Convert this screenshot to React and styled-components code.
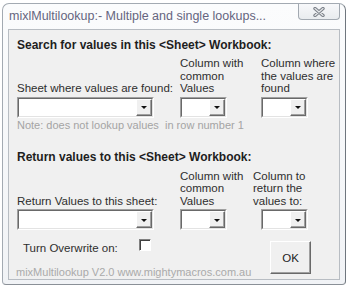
import React from 'react';
import styled, { createGlobalStyle } from 'styled-components';

const Global = createGlobalStyle`
  html, body { margin: 0; padding: 0; background: #ffffff; }
  body {
    width: 350px; height: 286px; overflow: hidden;
    font-family: "Liberation Sans", Arial, sans-serif;
    -webkit-font-smoothing: antialiased;
  }
`;

const Window = styled.div`
  box-sizing: border-box;
  margin: 3px 0 0 2px;
  width: 344px;
  height: 282px;
  border: 1px solid #a3aab2;
  border-right-color: #6f767e;
  border-bottom-color: #8a9097;
  border-radius: 7px 7px 4px 4px;
  background: linear-gradient(#fbfcfd, #f1f3f6);
  display: flex;
  flex-direction: column;
  padding: 0 4px 4px 5px;
`;

const TitleBar = styled.div`
  height: 25px;
  flex: none;
  display: flex;
  align-items: flex-start;
  justify-content: space-between;
`;

const Title = styled.div`
  padding: 5px 0 0 1px;
  font-size: 12.5px;
  line-height: 15px;
  color: #65657f;
  white-space: nowrap;
`;

const CloseButton = styled.div`
  box-sizing: border-box;
  width: 42px;
  height: 16px;
  margin-right: 1px;
  border: 1px solid #a2a9b1;
  border-top: none;
  border-radius: 0 0 4px 4px;
  background: linear-gradient(#f7f8fa, #e9ecef);
  display: flex;
  align-items: center;
  justify-content: center;
`;

const Panel = styled.div`
  box-sizing: border-box;
  flex: 1;
  min-height: 0;
  overflow: hidden;
  margin-right: 1px;
  border: 1px solid #b8bdc3;
  background: #f0f0f0;
  padding: 8px 8px 0 8px;
  color: #262626;
`;

const Heading = styled.div`
  font-weight: bold;
  font-size: 12px;
  line-height: 15px;
  color: #1e1e1e;
  white-space: nowrap;
  margin-top: ${(p) => p.$top || 0}px;
`;

const FieldGrid = styled.div`
  display: grid;
  grid-template-columns: 163px 81px 47px;
  align-items: end;
  margin-top: ${(p) => p.$top}px;
`;

const Field = styled.div`
  display: flex;
  flex-direction: column;
  gap: ${(p) => p.$gap}px;
`;

const Label = styled.div`
  font-size: 11.5px;
  line-height: 12.5px;
  color: #2e2e2e;
  white-space: pre;
  margin-left: ${(p) => p.$shift || 0}px;
`;

const ComboBox = styled.div`
  box-sizing: border-box;
  width: ${(p) => p.$w}px;
  height: 21px;
  border-top: 1px solid #a0a0a0;
  border-left: 1px solid #a0a0a0;
  border-right: 1px solid #ffffff;
  border-bottom: 1px solid #ffffff;
  display: flex;
`;

const ComboInner = styled.div`
  flex: 1;
  display: flex;
  border-top: 1px solid #696969;
  border-left: 1px solid #696969;
  border-right: 1px solid #e3e3e3;
  border-bottom: 1px solid #e3e3e3;
  background: #ffffff;
`;

const ComboText = styled.div`
  flex: 1;
`;

const DropButton = styled.div`
  box-sizing: border-box;
  width: 16px;
  background: #f0f0f0;
  border-top: 1px solid #ffffff;
  border-left: 1px solid #ffffff;
  border-right: 1px solid #696969;
  border-bottom: 1px solid #696969;
  box-shadow: inset -1px -1px 0 #a0a0a0;
  display: flex;
  align-items: center;
  justify-content: center;
  &::after {
    content: "";
    border-left: 3.5px solid transparent;
    border-right: 3.5px solid transparent;
    border-top: 3.5px solid #111;
    margin-top: 1px;
  }
`;

const Note = styled.div`
  margin-top: 1px;
  font-size: 11px;
  line-height: 13px;
  color: #a4a4a4;
  white-space: pre;
`;

const Bottom = styled.div`
  display: grid;
  grid-template-columns: 253px 41px;
  grid-template-rows: auto auto;
  margin-top: 10px;
`;

const OverwriteRow = styled.div`
  display: flex;
  align-items: flex-start;
  padding: 2px 0 0 6px;
`;

const OverwriteLabel = styled.div`
  width: 116px;
  font-size: 11.5px;
  line-height: 13px;
  color: #2e2e2e;
`;

const CheckBox = styled.div`
  box-sizing: border-box;
  width: 12px;
  height: 12px;
  margin-top: -3px;
  border-top: 1px solid #808080;
  border-left: 1px solid #808080;
  border-right: 1px solid #ffffff;
  border-bottom: 1px solid #ffffff;
  box-shadow: inset 1px 1px 0 #404040;
  background: #ffffff;
`;

const OkButton = styled.div`
  grid-column: 2;
  grid-row: 1 / span 2;
  box-sizing: border-box;
  height: 33px;
  margin-top: 1px;
  background: #f0f0f0;
  border-top: 1px solid #ffffff;
  border-left: 1px solid #ffffff;
  border-right: 1px solid #696969;
  border-bottom: 1px solid #696969;
  box-shadow: inset -1px -1px 0 #a0a0a0;
  display: flex;
  align-items: center;
  justify-content: center;
  font-size: 11.5px;
  color: #222;
`;

const Footer = styled.div`
  grid-column: 1;
  margin-top: 11px;
  font-size: 11px;
  line-height: 13px;
  color: #aaaaaa;
  margin-left: -1px;
  white-space: nowrap;
`;

const CloseGlyph = () => (
  <svg width="12" height="10" viewBox="0 0 12 10">
    <path d="M2 1.5 L10 8.5 M10 1.5 L2 8.5" stroke="#7b8088" strokeWidth="3.4" strokeLinecap="round" />
    <path d="M2 1.5 L10 8.5 M10 1.5 L2 8.5" stroke="#e6e8eb" strokeWidth="1.2" strokeLinecap="round" />
  </svg>
);

const Combo = ({ w }) => (
  <ComboBox $w={w}>
    <ComboInner>
      <ComboText />
      <DropButton />
    </ComboInner>
  </ComboBox>
);

export default function App() {
  return (
    <>
      <Global />
      <Window>
        <TitleBar>
          <Title>mixlMultilookup:- Multiple and single lookups...</Title>
          <CloseButton>
            <CloseGlyph />
          </CloseButton>
        </TitleBar>
        <Panel>
          <Heading>Search for values in this &lt;Sheet&gt; Workbook:</Heading>
          <FieldGrid $top={4}>
            <Field $gap={2}>
              <Label>Sheet where values are found:</Label>
              <Combo w={137} />
            </Field>
            <Field $gap={2}>
              <Label>{'Column with\ncommon\nValues'}</Label>
              <Combo w={47} />
            </Field>
            <Field $gap={2}>
              <Label>{'Column where\nthe values are\nfound'}</Label>
              <Combo w={47} />
            </Field>
          </FieldGrid>
          <Note>Note: does not lookup values  in row number 1</Note>
          <Heading $top={18}>Return values to this &lt;Sheet&gt; Workbook:</Heading>
          <FieldGrid $top={5}>
            <Field $gap={2}>
              <Label>Return Values to this sheet:</Label>
              <Combo w={137} />
            </Field>
            <Field $gap={2}>
              <Label>{'Column with\ncommon\nValues'}</Label>
              <Combo w={47} />
            </Field>
            <Field $gap={2}>
              <Label $shift={-8}>{'Column to\nreturn the\nvalues to:'}</Label>
              <Combo w={47} />
            </Field>
          </FieldGrid>
          <Bottom>
            <OverwriteRow>
              <OverwriteLabel>Turn Overwrite on:</OverwriteLabel>
              <CheckBox />
            </OverwriteRow>
            <OkButton>OK</OkButton>
            <Footer>mixMultilookup V2.0 www.mightymacros.com.au</Footer>
          </Bottom>
        </Panel>
      </Window>
    </>
  );
}
